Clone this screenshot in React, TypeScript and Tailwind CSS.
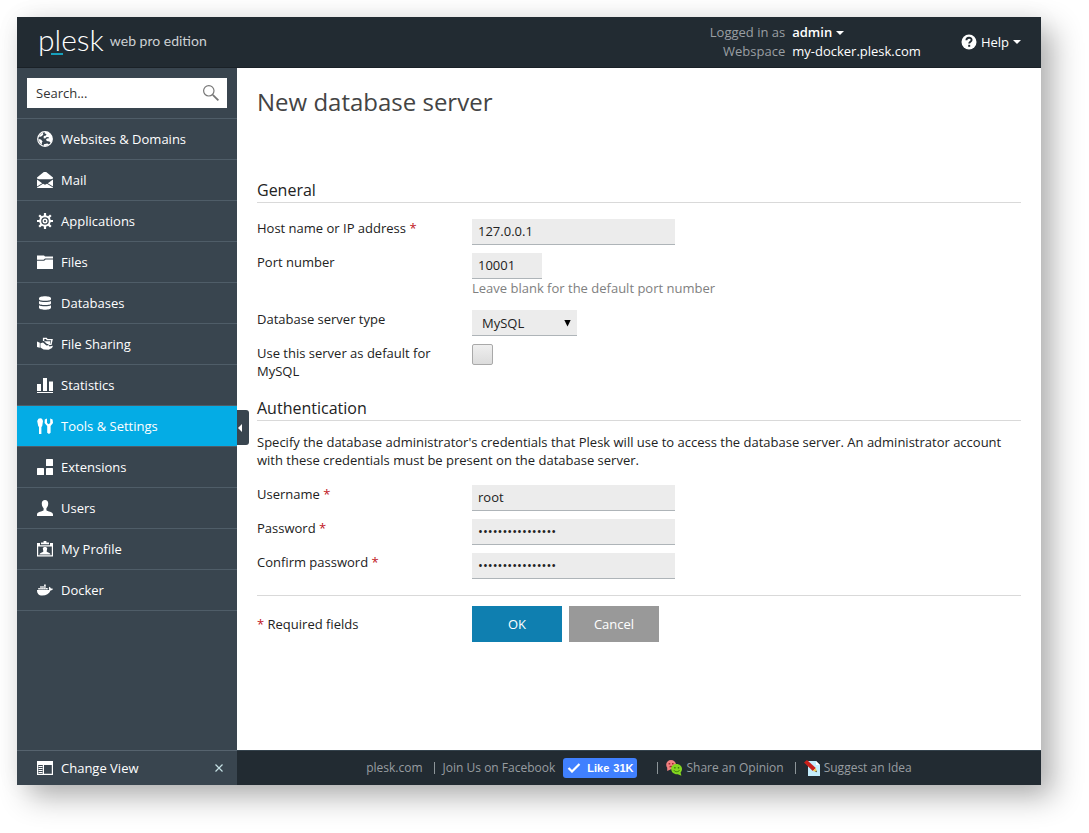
import { useState, type ReactNode } from 'react'
import { FaDocker } from 'react-icons/fa'

const navItems: { label: string; icon: ReactNode }[] = [
  {
    label: 'Websites & Domains',
    icon: (
      <>
        <circle cx="8" cy="8" r="7.3" fill="none" stroke="currentColor" strokeWidth="1.2" />
        <path d="M8 .8C12 .8 15.2 4 15.2 8c0 1.400-.6 3-1.400 4L12.400 10.400 9.800 10 9 8.400 10 7.400l2-.2-.6-1.200-2.200.2-1 1.400-1.600-.4L6.800 5 9 4.400 9.400 3 7.600 2.600z" />
        <path d="M3.200 3.400 5.600 1.800 6.400 3.200 5 5 3.400 5.800 1.600 5.600zM1.400 8 4 8.600 5.600 10.400 4.800 11.800 5 13.800 2.800 12z" />
        <path d="M6.800 13.200 10.400 12.400 12 13.400 9.800 14.800 7 15z" />
      </>
    ),
  },
  {
    label: 'Mail',
    icon: (
      <>
        <path d="M0 5.600 6.800 0h2.400L16 5.600v.8l-2 .8H2L0 6.400z" />
        <path d="M0 7.400 5.200 11.200 0 14.400zM16 7.400 10.800 11.200 16 14.400zM0 16v-.6l6-3.600 2 1 2-1 6 3.600v.6z" />
      </>
    ),
  },
  {
    label: 'Applications',
    icon: (
      <g fill="none" stroke="currentColor">
        <circle cx="8" cy="8" r="4.800" strokeWidth="2" />
        <circle cx="8" cy="8" r="1.800" strokeWidth="1.400" />
        <path
          d="M8 0v3M8 13v3M0 8h3M13 8h3M2.200 2.200l2.200 2.200M11.600 11.600l2.200 2.200M2.200 13.800l2.200-2.200M11.600 4.400l2.200-2.200"
          strokeWidth="2.200"
        />
      </g>
    ),
  },
  {
    label: 'Files',
    icon: (
      <>
        <path d="M0 1.400h7l1 1.200h8v1.800H8L6.600 5.800H0z" />
        <path d="M0 6.800h7.200L8.600 5.400H16V15H0z" />
      </>
    ),
  },
  {
    label: 'Databases',
    icon: (
      <>
        <path d="M2 3.400C2 .6 14 .6 14 3.400v.8C14 6.200 2 6.200 2 4.200z" />
        <path d="M2 6c1.600 1.400 10.400 1.400 12 0v2.400c0 2-12 2-12 0z" />
        <path d="M2 10.200c1.600 1.400 10.400 1.400 12 0v2.600c0 2.600-12 2.600-12 0z" />
      </>
    ),
  },
  {
    label: 'File Sharing',
    icon: (
      <>
        <path d="M0 5.400 2.800 6.800v5L0 11zM3.400 7.200 6 6.600l3.400 2.800 2.600-.2.400 1.400 3.600-.8-1 2.200-3.400 1.800-5-.4-3.200-2z" />
        <path
          d="M6.600 5V2.400h2.800l.8 1.200H15l-1 4.800h-2.600"
          fill="none"
          stroke="currentColor"
          strokeWidth="1.400"
        />
        <path d="M7 5.200h6.400l-.6 2.800H10z" />
      </>
    ),
  },
  {
    label: 'Statistics',
    icon: <path d="M0 15h16v1H0zM0 7h4v7H0zM6 1h4v13H6zM12 4.600h4V14h-4z" />,
  },
  {
    label: 'Tools & Settings',
    icon: (
      <>
        <path d="M1.400.8Q3.200-.200 5 .8L6 3 5.200 8 4.400 9v7H2V9L1.200 8 .2 3z" />
        <path d="M7.800 1.400 10 .4V5l1.600 1.200L13.200 5V.4l2.400 1 .4 3.600-2.400 3v6.800L12 16l-1.800-1.200V8L7.600 5z" />
      </>
    ),
  },
  {
    label: 'Extensions',
    icon: (
      <>
        <rect x="9" y="0" width="7" height="7" rx="0.6" />
        <rect x="0" y="9" width="7" height="7" rx="0.6" />
        <rect x="9" y="9" width="7" height="7" rx="0.6" />
      </>
    ),
  },
  {
    label: 'Users',
    icon: (
      <path d="M8 0c2.200 0 3.400 1.600 3.200 4-.1 2-1 3.400-1.800 4.200v2c1 1.200 6.600 1.600 6.600 4.200V16H0v-1.600c0-2.600 5.600-3 6.600-4.200v-2C5.800 7.400 4.900 6 4.800 4 4.600 1.600 5.800 0 8 0z" />
    ),
  },
  {
    label: 'My Profile',
    icon: (
      <>
        <path d="M6.600 0h2.800v1.600H12v1.600H4V1.600h2.600z" />
        <path d="M0 2h3v2.200h10V2h3v13.400H0zM1.200 5.400v8.800h13.600V5.400z" fillRule="evenodd" />
        <path d="M2.400 13.400c.2-1.800 3-2 4-3L5.800 7.600C5.800 5.600 10.200 5.600 10.200 7.600L9.600 10.400c1 1 3.800 1.200 4 3z" />
      </>
    ),
  },
  { label: 'Docker', icon: null },
]

function Icon({ children }: { children: ReactNode }) {
  return (
    <svg viewBox="0 0 16 16" className="size-4 shrink-0" fill="currentColor" aria-hidden="true">
      {children}
    </svg>
  )
}

function Caret() {
  return (
    <svg viewBox="0 0 8 4" className="h-1 w-2" fill="currentColor" aria-hidden="true">
      <path d="M0 0h8L4 4z" />
    </svg>
  )
}

function Header() {
  return (
    <header className="flex h-[51px] items-center border-b border-[#1a2127] bg-[#222b32] pr-5 pl-[21px]">
      <a href="#" className="flex items-center gap-1.5 pb-0.5 font-['Lato']">
        <span className="relative pb-1 text-[30px] leading-8 font-light text-white">
          plesk
          <span className="absolute bottom-1 left-[13px] h-0.5 w-3 bg-[#16a0bd]" />
        </span>
        <span className="text-sm text-[#cdd1d4]">web pro edition</span>
      </a>

      <dl className="ml-auto grid grid-cols-[auto_auto] gap-x-[7px] leading-[19px]">
        <dt className="text-right text-[#9a9fa3]">Logged in as</dt>
        <dd>
          <button type="button" className="flex items-center gap-1 font-semibold text-white">
            admin
            <Caret />
          </button>
        </dd>
        <dt className="text-right text-[#9a9fa3]">Webspace</dt>
        <dd className="text-white">my-docker.plesk.com</dd>
      </dl>

      <button type="button" className="ml-10 flex items-center gap-1 text-white">
        <svg viewBox="0 0 16 16" className="size-4" aria-hidden="true">
          <circle cx="8" cy="8" r="7.500" fill="#fff" />
          <path
            d="M5.400 6.200C5.400 3 10.600 3 10.600 6c0 1.800-2.400 1.800-2.400 3.600"
            fill="none"
            stroke="#222b32"
            strokeWidth="1.900"
          />
          <rect x="7.200" y="10.800" width="2" height="2" fill="#222b32" />
        </svg>
        Help
        <Caret />
      </button>
    </header>
  )
}

function Sidebar() {
  return (
    <aside className="relative flex w-[220px] shrink-0 flex-col bg-[#39454f] text-white">
      <div className="relative p-2.5">
        <input
          type="text"
          aria-label="Search"
          placeholder="Search..."
          className="h-[30px] w-full bg-white pr-8 pl-[9px] text-[#222] outline-none placeholder:text-[#333]"
        />
        <svg
          viewBox="0 0 16 16"
          className="absolute top-[17px] right-[18px] size-4"
          fill="none"
          stroke="#777"
          aria-hidden="true"
        >
          <circle cx="5.800" cy="5.800" r="5.200" strokeWidth="1.200" />
          <path d="M9.800 9.800 15.400 15.400" strokeWidth="1.800" />
        </svg>
      </div>

      <nav>
        <ul className="border-t border-[#4f5d68]">
          {navItems.map(({ label, icon }) => {
            const active = label === 'Tools & Settings'
            return (
              <li key={label} className="relative border-b border-[#4f5d68]">
                <a
                  href="#"
                  className={`flex h-10 items-center gap-2 pl-5 ${active ? 'bg-[#04ace5]' : ''}`}
                >
                  {icon ? <Icon>{icon}</Icon> : <FaDocker size={16} />}
                  {label}
                </a>
                {active && (
                  <button
                    type="button"
                    aria-label="Collapse sidebar"
                    className="absolute top-1 left-full flex h-[35px] w-3 items-center rounded-r-[3px] bg-[#39454f] pl-px"
                  >
                    <svg viewBox="0 0 4 8" className="h-2 w-1" fill="#fff" aria-hidden="true">
                      <path d="M4 0v8L0 4z" />
                    </svg>
                  </button>
                )}
              </li>
            )
          })}
        </ul>
      </nav>

      <div className="mt-auto flex h-[35px] items-center border-t border-[#56636e] pr-3.5 pl-5">
        <a href="#" className="flex items-center gap-2">
          <Icon>
            <path d="M0 1h16v14H0zM1.200 5v8.800h4.600V5zM7 5v8.800h7.800V5z" fillRule="evenodd" />
            <path d="M1.500 6h4v1h-4zM1.500 8h4v1h-4zM1.500 10h4v1h-4zM1.500 12h4v1h-4z" />
          </Icon>
          Change View
        </a>
        <button type="button" aria-label="Close" className="ml-auto text-[#c5e0e4]">
          <svg viewBox="0 0 8 8" className="size-2" fill="none" stroke="currentColor" aria-hidden="true">
            <path d="M.5.5l7 7M7.500.5l-7 7" strokeWidth="1.200" />
          </svg>
        </button>
      </div>
    </aside>
  )
}

function SectionTitle({ children }: { children: ReactNode }) {
  return <h2 className="border-b border-[#d9d9d9] text-base leading-6 text-[#222]">{children}</h2>
}

function Field({
  id,
  label,
  required,
  children,
}: {
  id: string
  label: string
  required?: boolean
  children: ReactNode
}) {
  return (
    <div className="flex items-start">
      <label htmlFor={id} className="w-[215px] shrink-0 pr-8">
        {label} {required && <span className="text-[#c0141c]">*</span>}
      </label>
      <div>{children}</div>
    </div>
  )
}

const fieldClass = 'block h-[26px] border-b border-[#aeb4b8] bg-[#ececec] text-[#222] outline-none'
const inputClass = `${fieldClass} px-1.5 pb-0.5`

function ServerForm() {
  const [form, setForm] = useState({
    host: '127.0.0.1',
    port: '10001',
    username: 'root',
    password: 'plesk-docker-123',
    confirm: 'plesk-docker-123',
  })

  const bind = (name: keyof typeof form) => ({
    id: name,
    name,
    value: form[name],
    onChange: (e: { target: { value: string } }) => setForm({ ...form, [name]: e.target.value }),
  })

  return (
    <form className="mt-[60px]" onSubmit={(e) => e.preventDefault()}>
      {/* General */}
      <SectionTitle>General</SectionTitle>
      <div className="mt-4 space-y-2">
        <Field id="host" label="Host name or IP address" required>
          <input type="text" className={`${inputClass} w-[203px]`} {...bind('host')} />
        </Field>
        <Field id="port" label="Port number">
          <input type="text" className={`${inputClass} w-[70px]`} {...bind('port')} />
          <p className="pb-[5px] text-[#808080]">Leave blank for the default port number</p>
        </Field>
        <Field id="type" label="Database server type">
          <div className="relative">
            <select id="type" className={`${fieldClass} w-[105px] appearance-none pl-2.5`}>
              <option>MySQL</option>
              <option>PostgreSQL</option>
            </select>
            <svg
              viewBox="0 0 7 7"
              className="pointer-events-none absolute top-2.5 right-1.5 size-[7px]"
              aria-hidden="true"
            >
              <path d="M.3 0h6.400L3.500 6.600z" />
            </svg>
          </div>
        </Field>
        <Field id="default" label="Use this server as default for MySQL">
          <input
            id="default"
            type="checkbox"
            className="block size-[21px] appearance-none rounded-[2px] border border-[#a9a9a9] bg-linear-to-b from-[#efefef] to-[#dcdcdc] checked:to-[#9a9a9a]"
          />
        </Field>
      </div>

      {/* Authentication */}
      <div className="mt-4">
        <SectionTitle>Authentication</SectionTitle>
      </div>
      <p className="mt-3">
        Specify the database administrator's credentials that Plesk will use to access the database
        server. An administrator account with these credentials must be present on the database
        server.
      </p>
      <div className="mt-4 space-y-2">
        <Field id="username" label="Username" required>
          <input type="text" className={`${inputClass} w-[203px]`} {...bind('username')} />
        </Field>
        <Field id="password" label="Password" required>
          <input type="password" className={`${inputClass} w-[203px]`} {...bind('password')} />
        </Field>
        <Field id="confirm" label="Confirm password" required>
          <input type="password" className={`${inputClass} w-[203px]`} {...bind('confirm')} />
        </Field>
      </div>

      {/* Actions */}
      <div className="mt-4 flex items-center border-t border-[#d9d9d9] pt-2.5">
        <p className="w-[215px]">
          <span className="text-[#c0141c]">*</span> Required fields
        </p>
        <div className="flex gap-[7px] text-white">
          <button type="submit" className="h-9 w-[90px] bg-[#0f7fb0]">
            OK
          </button>
          <button type="button" className="h-9 w-[90px] bg-[#999]">
            Cancel
          </button>
        </div>
      </div>
    </form>
  )
}

function Divider() {
  return <span className="h-3 w-px bg-[#8d9599]" />
}

function Footer() {
  return (
    <footer className="flex h-[35px] items-center justify-center border-t border-[#34424c] bg-[#222b32] text-xs leading-[18px] text-[#989da1]">
      <a href="#" className="mr-[11px]">
        plesk.com
      </a>
      <Divider />
      <a href="#" className="ml-2">
        Join Us on Facebook
      </a>
      <button
        type="button"
        className="mr-5 ml-2 flex h-5 items-center rounded-[3px] bg-[#4080ff] px-1 font-['Liberation_Sans'] text-[11px] text-white"
      >
        <svg viewBox="0 0 14 10" className="h-2.5 w-3.5" fill="none" stroke="#fff" aria-hidden="true">
          <path d="M1.500 5 5 8.500 12.500 1" strokeWidth="2.200" />
        </svg>
        <span className="mr-1 ml-1.5 font-bold">Like</span>
        <span className="font-bold">31K</span>
      </button>
      <Divider />
      <a href="#" className="mr-[11px] ml-2 flex items-center gap-1">
        <svg viewBox="0 0 16 16" className="size-4" aria-hidden="true">
          <path d="M5 0C7.800 0 10 2 10 4.600S7.800 9.200 5 9.200L1.200 11V7.800C-1.200 4.600 1 0 5 0z" fill="#f08080" />
          <path d="M2.600 3h1.600v1.600H2.600zM6 3h1.600v1.600H6zM3 7.200c1-1.800 3-1.800 4 0z" fill="#a02c30" />
          <path d="M10.600 4c3 0 5.400 2.200 5.400 5 0 1.600-.6 2.600-1.400 3.600l.8 3.200-3.600-1.600C8 14.600 5.200 12.200 5.200 9s2.400-5 5.400-5z" fill="#83d61f" />
          <path d="M8.200 7h1.400v1.600H8.200zM11.800 7h1.400v1.600h-1.400z" fill="#3f7a0a" />
          <path d="M7.800 10.200c1.400 2 4.400 2 5.800 0" fill="none" stroke="#3f7a0a" />
        </svg>
        Share an Opinion
      </a>
      <Divider />
      <a href="#" className="ml-2 flex items-center gap-1">
        <svg viewBox="0 0 16 16" className="size-4" aria-hidden="true">
          <path d="M4 1h8l4 4v11H4z" fill="#c3ecfb" />
          <path d="M12 1v4h4z" fill="#fff" />
          <path d="M0 2.400 3 0 11.800 8 8.800 11z" fill="#c8201a" />
          <path d="m11.800 8 1 4L8.800 11z" fill="#f2c94c" />
          <path d="m12.400 10.600.5 1.600-1.700-.4z" fill="#333" />
        </svg>
        Suggest an Idea
      </a>
    </footer>
  )
}

export default function App() {
  return (
    <div className="flex min-h-screen bg-white pt-[17px] pr-12 pb-12 pl-[17px] font-['Open_Sans',sans-serif] text-[13px] leading-[18px] text-[#222]">
      <div className="flex flex-1 flex-col bg-white shadow-[12px_12px_28px_rgba(0,0,0,0.3),0_0_24px_rgba(0,0,0,0.05)]">
        <Header />
        <div className="flex flex-1">
          <Sidebar />
          <div className="flex flex-1 flex-col">
            <main className="flex-1 px-5 pt-[18px] pb-10">
              <h1 className="text-2xl leading-8 text-[#444]">New database server</h1>
              <ServerForm />
            </main>
            <Footer />
          </div>
        </div>
      </div>
    </div>
  )
}
